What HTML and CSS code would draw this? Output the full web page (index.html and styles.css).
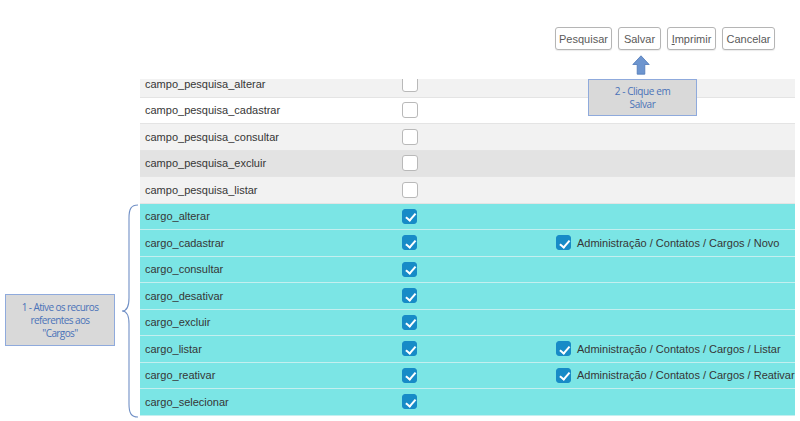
FILE: index.html
```html
<!DOCTYPE html>
<html lang="pt">
<head>
<meta charset="utf-8">
<link rel="stylesheet" href="styles.css">
</head>
<body>
<div class="page">
  <div class="toolbar">
    <button class="btn">Pesquisar</button>
    <button class="btn">Salvar</button>
    <button class="btn"><u>I</u>mprimir</button>
    <button class="btn">Cancelar</button>
  </div>

  <div class="table-wrap">
    <div class="table">
      <div class="row alt"><span class="name">campo_pesquisa_alterar</span><span class="cb"></span></div>
      <div class="row"><span class="name">campo_pesquisa_cadastrar</span><span class="cb"></span></div>
      <div class="row alt"><span class="name">campo_pesquisa_consultar</span><span class="cb"></span></div>
      <div class="row hover"><span class="name">campo_pesquisa_excluir</span><span class="cb"></span></div>
      <div class="row alt"><span class="name">campo_pesquisa_listar</span><span class="cb"></span></div>
      <div class="row on"><span class="name">cargo_alterar</span><span class="cb checked"></span></div>
      <div class="row on"><span class="name">cargo_cadastrar</span><span class="cb checked"></span><span class="menu"><span class="cb checked"></span>Administração / Contatos / Cargos / Novo</span></div>
      <div class="row on"><span class="name">cargo_consultar</span><span class="cb checked"></span></div>
      <div class="row on"><span class="name">cargo_desativar</span><span class="cb checked"></span></div>
      <div class="row on"><span class="name">cargo_excluir</span><span class="cb checked"></span></div>
      <div class="row on"><span class="name">cargo_listar</span><span class="cb checked"></span><span class="menu"><span class="cb checked"></span>Administração / Contatos / Cargos / Listar</span></div>
      <div class="row on"><span class="name">cargo_reativar</span><span class="cb checked"></span><span class="menu"><span class="cb checked"></span>Administração / Contatos / Cargos / Reativar</span></div>
      <div class="row on"><span class="name">cargo_selecionar</span><span class="cb checked"></span></div>
    </div>
  </div>

  <svg class="arrow" width="18" height="20" viewBox="0 0 18 20">
    <path d="M9 0.8 L17.2 9.5 L12.8 9.5 L12.8 19.2 L5.2 19.2 L5.2 9.5 L0.8 9.5 Z" fill="#6d95cf" stroke="#4f78b8" stroke-width="0.8"/>
  </svg>
  <div class="note note-save">2 - Clique em<br>Salvar</div>

  <svg class="brace" width="20" height="214" viewBox="0 0 20 214">
    <path d="M17 1 C10 1 8 5 8 14 L8 94 C8 103 6 107 1 107 C6 107 8 111 8 120 L8 200 C8 209 10 213 17 213" fill="none" stroke="#7190c6" stroke-width="1.1"/>
  </svg>
  <div class="note note-cargos">1 - Ative os recuros<br>referentes aos<br>"Cargos"</div>
</div>
</body>
</html>
```

FILE: styles.css
```css
* { box-sizing: border-box; }
html, body { margin: 0; padding: 0; background: #fff; }
body {
  font-family: "Liberation Sans", Arial, sans-serif;
  font-size: 11px;
  color: #363636;
}
.page {
  position: relative;
  width: 800px;
  height: 421px;
  overflow: hidden;
}
.toolbar {
  display: flex;
  justify-content: flex-end;
  gap: 6px;
  height: 79px;
  padding: 27px 25px 0 0;
}
.btn {
  height: 23px;
  padding: 0;
  font-family: "Liberation Sans", Arial, sans-serif;
  font-size: 11px;
  color: #5a5a5a;
  background: #fff;
  border: 1px solid #b5b5b5;
  border-radius: 3px;
  box-shadow: 0 1px 1px rgba(0,0,0,0.08);
  white-space: nowrap;
}
.btn:nth-child(1) { width: 57px; }
.btn:nth-child(2) { width: 43px; }
.btn:nth-child(3) { width: 49px; }
.btn:nth-child(4) { width: 53px; }
.btn u { text-decoration: underline; }

.table-wrap {
  margin-left: 140px;
  width: 655px;
  height: 337px;
  overflow: hidden;
}
.table { margin-top: -8px; }
.row {
  display: flex;
  align-items: center;
  height: 26.5px;
  border-bottom: 1px solid #e4e4e4;
  background: #fff;
}
.row.alt { background: #f2f2f2; }
.row.hover { background: #e3e3e3; }
.row.on { background: #7be5e5; border-bottom-color: #c4efef; }
.name {
  width: 262px;
  padding-left: 5px;
  flex: none;
}
.cb {
  flex: none;
  width: 16px;
  height: 16px;
  border: 1px solid #b9b9b9;
  border-radius: 3px;
  background: #fff;
  position: relative;
}
.cb.checked {
  width: 15px;
  height: 15px;
  background: #178bc7;
  border-color: #178bc7;
}
.cb.checked::after {
  content: "";
  position: absolute;
  left: 4.5px;
  top: 1.5px;
  width: 3.5px;
  height: 7.5px;
  border: solid #fff;
  border-width: 0 2px 2px 0;
  transform: rotate(40deg);
}
.menu {
  display: flex;
  align-items: center;
  gap: 6px;
  margin-left: 139px;
  white-space: nowrap;
}

.arrow {
  position: absolute;
  left: 632px;
  top: 55px;
}
.brace {
  position: absolute;
  left: 121px;
  top: 204px;
}
.note {
  position: absolute;
  background: #d9d9d9;
  border: 1px solid #8faadc;
  color: #4a72b8;
  font-family: "Open Sans", "Liberation Sans", sans-serif;
  font-size: 10px;
  letter-spacing: -0.4px;
  text-align: center;
  display: flex;
  align-items: center;
  justify-content: center;
}
.note-save {
  left: 588px;
  top: 79px;
  width: 109px;
  height: 37px;
  line-height: 13px;
}
.note-cargos {
  left: 5px;
  top: 294px;
  width: 110px;
  height: 52px;
  line-height: 13px;
  letter-spacing: -0.6px;
}
```
